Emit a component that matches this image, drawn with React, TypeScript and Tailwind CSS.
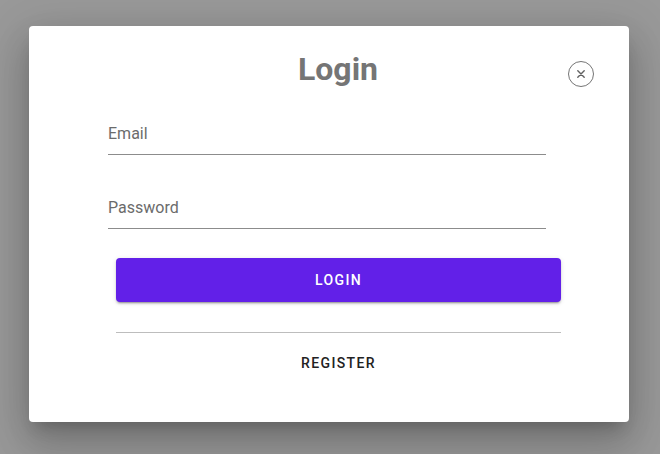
export default function App() {
  return (
    <div className="min-h-[454px] w-full bg-[#999999] pl-[29px] pt-[26px] font-['Roboto',sans-serif]">
      {/* Login dialog */}
      <div className="relative flex h-[396px] w-[600px] flex-col rounded bg-white shadow-[0_11px_15px_-7px_rgba(0,0,0,0.2),0_24px_38px_3px_rgba(0,0,0,0.14),0_9px_46px_8px_rgba(0,0,0,0.12)]">
        <button
          type="button"
          aria-label="Close"
          className="absolute right-[35px] top-[35px] flex size-[26px] items-center justify-center rounded-full border border-[#757575] text-[#616161]"
        >
          <svg viewBox="0 0 24 24" className="size-[14px]" fill="none" stroke="currentColor" strokeWidth="2.4" strokeLinecap="round">
            <path d="M6.5 6.5l11 11M17.5 6.5l-11 11" />
          </svg>
        </button>

        <h2 className="mt-[25px] pl-[18px] text-center text-[32px] font-bold leading-[36px] text-[#757575]">Login</h2>

        <div className="ml-[79px] mt-[35px] w-[438px] border-b border-[#8c8c8c] pb-2">
          <span className="text-base leading-6 text-[#6b6b6b]">Email</span>
        </div>
        <div className="ml-[79px] mt-[41px] w-[438px] border-b border-[#8c8c8c] pb-2">
          <span className="text-base leading-6 text-[#6b6b6b]">Password</span>
        </div>

        <div className="ml-[87px] w-[445px]">
          <button
            type="button"
            className="mt-[29px] flex h-[44px] w-full items-center justify-center rounded bg-[#6220e8] text-sm font-medium uppercase tracking-[1.4px] text-white shadow-[0_3px_1px_-2px_rgba(0,0,0,0.2),0_2px_2px_0_rgba(0,0,0,0.14),0_1px_5px_0_rgba(0,0,0,0.12)]"
          >
            Login
          </button>
          <div className="mt-[30px] h-px w-full bg-[#bdbdbd]" />
          <p className="mt-5 text-center text-sm font-medium uppercase leading-5 tracking-[1.4px] text-[#222222]">Register</p>
        </div>
      </div>
    </div>
  );
}
